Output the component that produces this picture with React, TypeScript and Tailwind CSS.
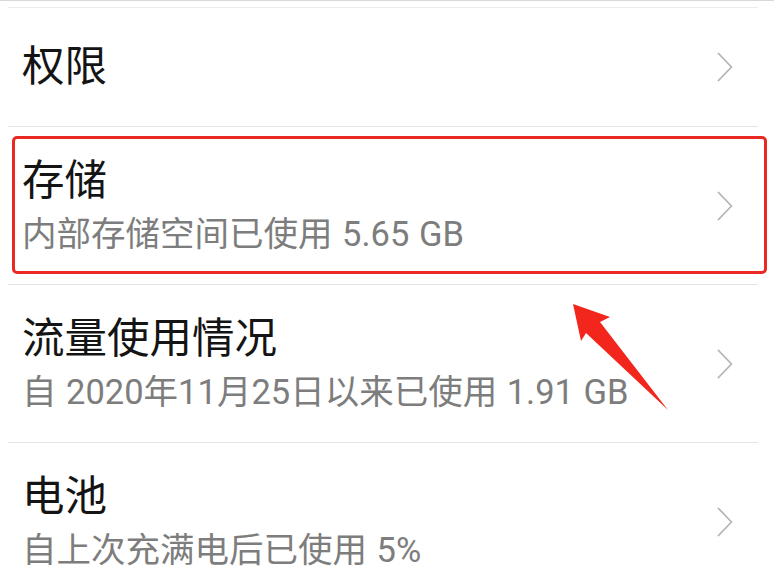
import React from "react";

const font = { fontFamily: 'Roboto, "Noto Sans CJK SC", sans-serif' };

function Chevron() {
  return (
    <svg width="16" height="30" viewBox="0 0 16 30" className="shrink-0">
      <path d="M1.5 1.5 L14.5 15 L1.5 28.5" fill="none" stroke="#b4b4b4" strokeWidth="1.8" strokeLinecap="round" strokeLinejoin="round" />
    </svg>
  );
}

function Divider() {
  return <div className="h-px bg-[#e4e4e6] ml-[8px] mr-[16px]" />;
}

function Row({ title, sub, h }: { title: string; sub?: string; h: string }) {
  return (
    <div className={`flex items-center justify-between pl-[22px] pr-[41px] ${h}`}>
      <div className="flex flex-col">
        <div className="text-[42.5px] leading-[52px] text-[#141414]">{title}</div>
        {sub && <div className="mt-[5px] text-[34.5px] leading-[44px] text-[#7d7d7d] [word-spacing:1px]">{sub}</div>}
      </div>
      <Chevron />
    </div>
  );
}

export default function App() {
  return (
    <div className="relative w-[774px] h-[584px] overflow-hidden bg-white" style={font}>
      <div className="h-px bg-[#d8d8d8]" />
      <div className="h-[6px]" />
      <div className="h-px bg-[#ececec] ml-[8px] mr-[16px]" />
      <Row title="权限" h="h-[118px]" />
      <Divider />
      <Row title="存储" sub="内部存储空间已使用 5.65 GB" h="h-[157px]" />
      <Divider />
      <Row title="流量使用情况" sub="自 2020年11月25日以来已使用 1.91 GB" h="h-[157px]" />
      <Divider />
      <Row title="电池" sub="自上次充满电后已使用 5%" h="h-[157px]" />

      <div className="absolute left-[12px] top-[136px] w-[755px] h-[138px] border-[3px] border-[#ea2a22] rounded-[5px] pointer-events-none" />
      <svg className="absolute left-0 top-0 pointer-events-none" width="774" height="584" viewBox="0 0 774 584">
        <polygon points="573,304 610,317 600,322 668,410 586,333 581,341" fill="#f2261c" />
      </svg>
    </div>
  );
}
